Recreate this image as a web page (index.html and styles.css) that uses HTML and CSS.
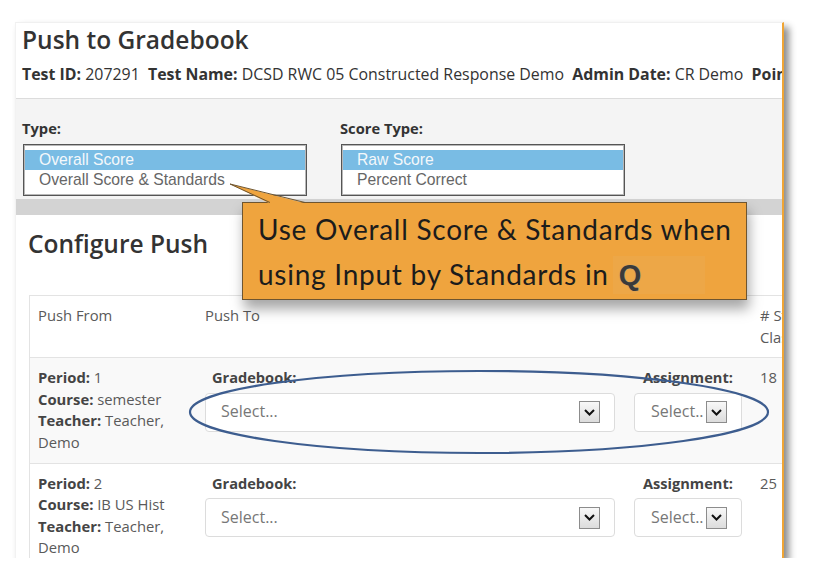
FILE: index.html
```html
<!DOCTYPE html>
<html>
<head>
<meta charset="utf-8">
<link rel="stylesheet" href="styles.css">
</head>
<body>
<div class="shot">
  <div class="page-head">
    <h1 class="title">Push to Gradebook</h1>
    <div class="info"><b>Test ID:</b> 207291&nbsp; <b>Test Name:</b> DCSD RWC 05 Constructed Response Demo&nbsp; <b>Admin Date:</b> CR Demo&nbsp; <b>Points Possible:</b> 4</div>
  </div>
  <div class="filters">
    <div class="filter">
      <div class="flabel">Type:</div>
      <div class="listbox">
        <div class="opt sel">Overall Score</div>
        <div class="opt">Overall Score &amp; Standards</div>
      </div>
    </div>
    <div class="filter">
      <div class="flabel">Score Type:</div>
      <div class="listbox">
        <div class="opt sel">Raw Score</div>
        <div class="opt">Percent Correct</div>
      </div>
    </div>
  </div>
  <div class="band"></div>
  <div class="configure">
    <h2 class="subtitle">Configure Push</h2>
    <div class="table">
      <div class="row head">
        <div class="c-from">Push From</div>
        <div class="c-to">Push To</div>
        <div class="c-count"># Students in<br>Class</div>
      </div>
      <div class="row odd">
        <div class="c-from">
          <div><b>Period:</b> 1</div>
          <div><b>Course:</b> semester</div>
          <div><b>Teacher:</b> Teacher, Demo</div>
        </div>
        <div class="c-to">
          <div class="grp gb">
            <div class="glabel">Gradebook:</div>
            <div class="selbox"><span>Select...</span><span class="arr"><svg width="11" height="7" viewBox="0 0 11 7"><path d="M1 1l4.5 4.5L10 1" fill="none" stroke="#111" stroke-width="2"/></svg></span></div>
          </div>
          <div class="grp asg">
            <div class="glabel">Assignment:</div>
            <div class="selbox"><span>Select..</span><span class="arr"><svg width="11" height="7" viewBox="0 0 11 7"><path d="M1 1l4.5 4.5L10 1" fill="none" stroke="#111" stroke-width="2"/></svg></span></div>
          </div>
        </div>
        <div class="c-count">18</div>
      </div>
      <div class="row">
        <div class="c-from">
          <div><b>Period:</b> 2</div>
          <div><b>Course:</b> IB US Hist</div>
          <div><b>Teacher:</b> Teacher, Demo</div>
        </div>
        <div class="c-to">
          <div class="grp gb">
            <div class="glabel">Gradebook:</div>
            <div class="selbox"><span>Select...</span><span class="arr"><svg width="11" height="7" viewBox="0 0 11 7"><path d="M1 1l4.5 4.5L10 1" fill="none" stroke="#111" stroke-width="2"/></svg></span></div>
          </div>
          <div class="grp asg">
            <div class="glabel">Assignment:</div>
            <div class="selbox"><span>Select..</span><span class="arr"><svg width="11" height="7" viewBox="0 0 11 7"><path d="M1 1l4.5 4.5L10 1" fill="none" stroke="#111" stroke-width="2"/></svg></span></div>
          </div>
        </div>
        <div class="c-count">25</div>
      </div>
    </div>
  </div>
  <svg class="ellipse" width="769" height="536" viewBox="0 0 769 536"><ellipse cx="463" cy="389" rx="289" ry="41" fill="none" stroke="#3d5d8f" stroke-width="2.2"/></svg>
  <div class="callout">Use Overall Score &amp; Standards when<br>using Input by Standards in<span class="q">Q</span></div>
  <svg class="tail" width="84" height="24" viewBox="0 0 84 24"><polygon points="2,2 42,21.5 78,21.5" fill="#efa43e"/><polyline points="42,20.5 2,2 77,20.5" fill="none" stroke="#6e5530" stroke-width="1"/></svg>
</div>
</body>
</html>
```

FILE: styles.css
```css
* { box-sizing: border-box; }
body { margin: 0; background: #fff; font-family: "Open Sans", sans-serif; color: #333; }
.shot {
  position: relative;
  width: 769px;
  height: 536px;
  margin: 22px 0 0 15px;
  overflow: hidden;
  background: #fff;
  border-top: 1px solid #f0f0f0;
  border-left: 1px solid #f2f2f2;
  border-right: 2px solid #f0a535;
  box-shadow: 5px 5px 7px rgba(0,0,0,.45);
}
.page-head { padding: 1px 0 14px 6px; border-bottom: 1px solid #dcdcdc; white-space: nowrap; }
.title { margin: 0; font-size: 24.5px; font-weight: 600; line-height: 32px; color: #333; }
.info { margin-top: 8px; font-size: 15.9px; line-height: 20px; color: #333; }
.info b { font-weight: 700; }
.filters { display: flex; gap: 33px; padding: 19px 0 3px 6px; background: #f4f4f4; }
.flabel { font-size: 14.7px; font-weight: 700; line-height: 20px; margin-bottom: 6px; color: #333; }
.listbox {
  width: 284px; margin-left: 1px;
  border: 1px solid #555; box-shadow: inset 0 0 0 1px #b8b8b8;
  background: #fff; padding: 5px 1px;
  font-family: "Liberation Sans", Arial, sans-serif; font-size: 15.7px;
}
.opt { line-height: 20px; padding-left: 14px; color: #666; }
.opt.sel { background: #79bce4; color: #f4f8fb; }
.band { height: 16px; background: #d3d3d3; }
.configure { padding: 13px 0 0 12px; }
.subtitle { margin: 0 0 35px; font-size: 24.5px; font-weight: 600; line-height: 32px; color: #333; }
.table { margin-left: 1px; width: 1000px; border-left: 1px solid #e3e3e3; border-top: 1px solid #e3e3e3; font-size: 14.8px; line-height: 21.6px; color: #5a5a5a; }
.row { display: flex; border-bottom: 1px solid #e3e3e3; background: #fff; }
.row.odd { background: #f9f9f9; }
.row b { color: #444; font-weight: 700; }
.c-from { width: 167px; flex: none; padding: 9px 8px; }
.c-to { width: 555px; flex: none; padding: 9px 10px 9px 8px; display: flex; gap: 19px; }
.c-count { padding: 9px 8px; }
.grp.gb { width: 410px; }
.grp.asg { width: 108px; }
.glabel { padding-left: 7px; font-size: 14.6px; font-weight: 700; color: #444; margin-bottom: 4px; }
.asg .glabel { padding-left: 9px; }
.selbox {
  height: 39px; border: 1px solid #dcdcdc; border-radius: 4px; background: #fff;
  display: flex; align-items: center; justify-content: space-between;
  padding: 0 14px 0 15px; font-size: 16px; color: #777;
}
.asg .selbox { padding: 0 14px 0 16px; }
.arr {
  width: 21px; height: 22px; border: 1px solid #8c8c8c; flex: none;
  background: linear-gradient(#f8f8f8, #dcdcdc);
  display: flex; align-items: center; justify-content: center;
}
.ellipse { position: absolute; left: 0; top: 0; pointer-events: none; }
.callout {
  position: absolute; left: 226px; top: 179px; width: 505px; height: 98px;
  background: #efa43e; border: 1px solid #6e5530;
  padding: 4px 0 0 15px;
  font-family: Lato, sans-serif; font-size: 28px; letter-spacing: 0.75px; line-height: 45px; color: #1c1c1c;
  box-shadow: 2px 9px 12px rgba(0,0,0,.35);
  white-space: nowrap;
}
.q {
  display: inline-block; margin-left: 4px; padding: 0 64px 0 6px; line-height: 38px;
  background-color: #eda747;
  font-family: "Liberation Sans", sans-serif; font-weight: bold; font-size: 29px; letter-spacing: 0;
  color: #3a3a3a;
  text-shadow: 0 0 1px #999;
}
.tail { position: absolute; left: 212px; top: 159px; }
```
